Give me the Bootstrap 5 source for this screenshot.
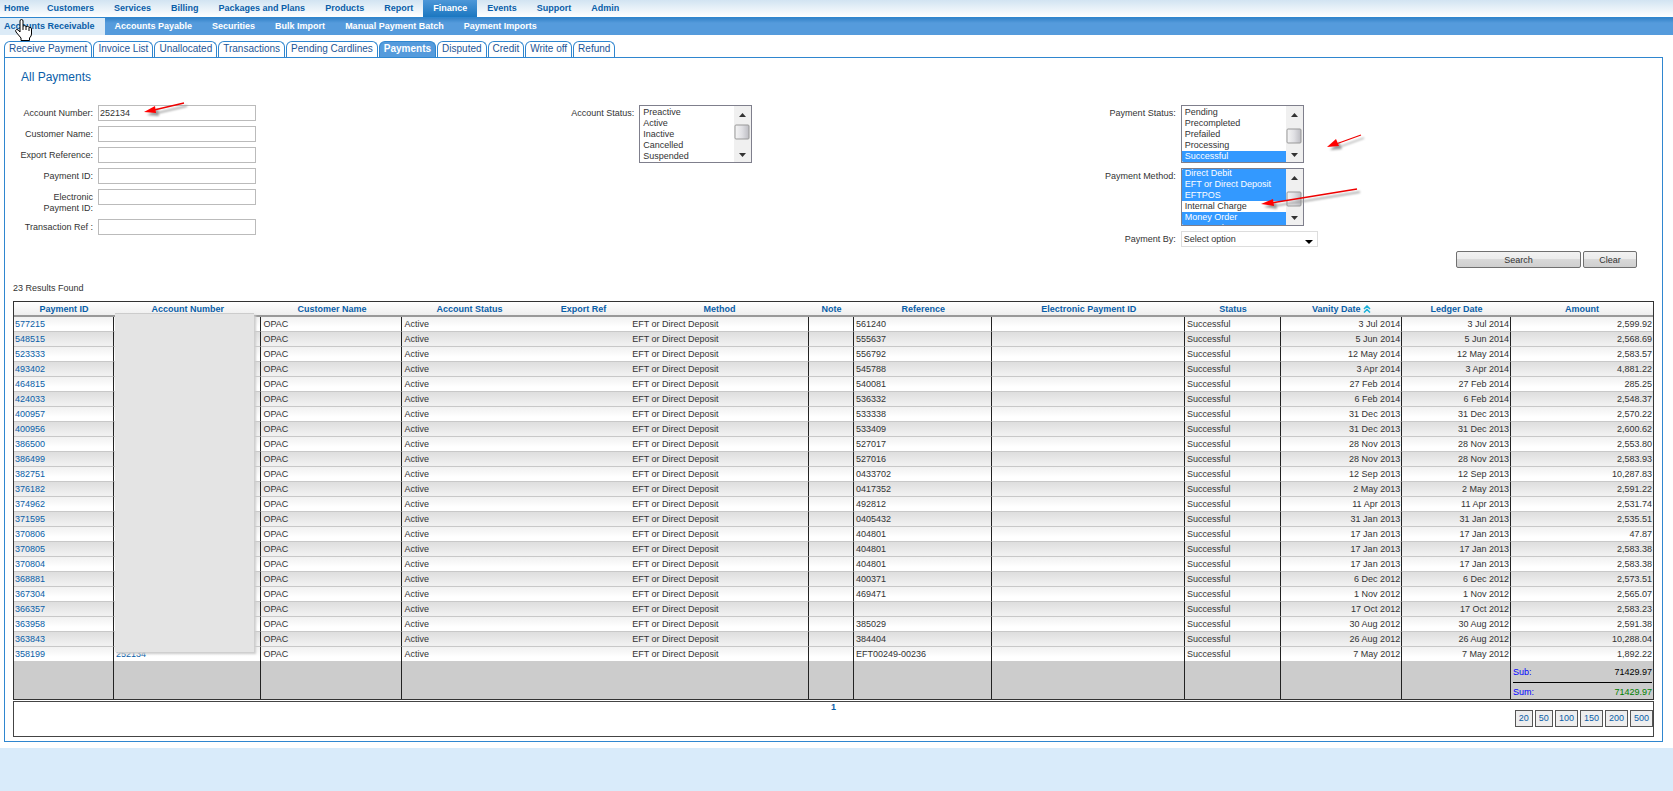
<!DOCTYPE html>
<html lang="en">
<head>
<meta charset="utf-8">
<meta name="viewport" content="width=device-width, initial-scale=1">
<title>All Payments</title>
<link rel="stylesheet" href="https://cdn.jsdelivr.net/npm/bootstrap@5.3.0/dist/css/bootstrap.min.css">
<style>
  body { font: 9px/11px "Liberation Sans", Arial, sans-serif; color: #333; background: #d9ebfa; }
  a { text-decoration: none; color: #0a5ea8; }
  .page-sheet { background: #fff; padding-bottom: 6px; }
  .topnav { height: 18px; background: linear-gradient(#d2e4f2, #fff); border-bottom: 1px solid #2f86cf; font-weight: bold; }
  .topnav a, .subnav a { padding: 0 10px; line-height: 16px; }
  .topnav a:first-child { padding: 0 8px 0 4px; }
  .subnav a:first-child { padding-left: 4px; }
  .topnav a.active { color: #fff; background: linear-gradient(#4c97d8, #1c77c0); }
  .subnav { height: 17px; background: linear-gradient(#3583c8, #559bdc 5px); font-weight: bold; }
  .subnav a { color: #fff; }
  .subnav a.active { color: #0a5ea8; background: #dcebf7; }
  .hand { position: absolute; left: 15px; top: 19px; pointer-events: none; }
  .tabs { margin: 6px 10px 0 4px; gap: 1px; }
  .tabs a { height: 16px; padding: 0 4px; line-height: 14px; font-size: 10px; border: 1px solid #2f86cf; border-bottom: 0; border-radius: 6px 6px 0 0; color: #1c5596; }
  .tabs a.active { background: #559bdc; color: #fff; font-weight: bold; }
  .panel { margin: 0 10px 0 4px; border: 1px solid #2f86cf; padding: 0 8px 4px; }
  .panel h1 { font-size: 12px; line-height: 14px; color: #0a5ea8; margin: 12px 0 21px 8px; }
  .filters, .actions { margin-right: 17px; }
  .actions { gap: 2px; margin-top: -1px; }
  .field { display: grid; grid-template-columns: 80px 1fr; column-gap: 5px; justify-items: start; margin-bottom: 5px; position: relative; }
  .field label { justify-self: end; text-align: right; padding-top: 3px; }
  .field input { width: 158px; height: 16px; border: 1px solid #bbb; padding: 0 1px; color: #333; }
  .listbox { position: relative; height: 58px; border: 1px solid #7f7f8c; overflow: hidden; }
  .listbox select { width: 100%; height: 56px; border: 0; padding: 1px 16px 0 0; color: #333; outline: 0; background: #fff; overflow-y: scroll; scrollbar-width: none; display: block; }
  .listbox select::-webkit-scrollbar { display: none; }
  .listbox option { padding: 0 3px; line-height: 11px; min-height: 11px; height: 11px; }
  .listbox option:checked { background: #3399ff linear-gradient(#3399ff, #3399ff); color: #fff; }
  .listbox svg { position: absolute; right: 0; top: 0; }
  .status-a { width: 113px; }
  .status-b { width: 123px; }
  .pay-by { width: 137px; height: 16px; border: 1px solid #ddd; padding: 0 2px; color: #333; appearance: none; background: #fff url("data:image/svg+xml,%3Csvg xmlns='http://www.w3.org/2000/svg' width='8' height='5'%3E%3Cpath d='M0 0h8L4 4z'/%3E%3C/svg%3E") no-repeat right 4px bottom 1px; }
  .push { height: 17px; border: 1px solid #707070; border-radius: 2px; background: linear-gradient(#f2f2f2, #ebebeb 50%, #d9d9d9 50%, #cfcfcf); color: #333; padding: 0; line-height: 14px; }
  .push-wide { width: 125px; }
  .push-slim { width: 54px; }
  .found { margin: 15px 0 7px; }
  .grid-table { table-layout: fixed; width: 100%; border: 1px solid #333; border-collapse: separate; border-spacing: 0; }
  .grid-table th { height: 15px; padding: 0; text-align: center; color: #0a5ea8; border-bottom: 2px solid #999; background: linear-gradient(#fff, #eee); line-height: 12px; }
  .grid-table td { height: 15px; padding: 0 1px; white-space: nowrap; line-height: 12px; }
  .grid-table td:nth-child(n+2) { padding-left: 2px; }
  .grid-table tbody td { border-bottom: 1px solid #c8c8c8; background: linear-gradient(#f1f1f1, #fff 10px); }
  .grid-table tbody tr:nth-child(even) td { background: linear-gradient(#dedede, #f0f0f0 12px); }
  .grid-table tbody tr:last-child td { border-bottom: 0; height: 14px; }
  .grid-table td:not(:nth-child(4), :nth-child(5), :last-child) { border-right: 1px solid #222; }
  .grid-table tfoot td { background: #ccc; height: 38px; vertical-align: bottom; }
  .sub-line { height: 22px; padding-top: 5px; border-bottom: 1px solid #000; color: #000; }
  .sum-line { height: 16px; padding-top: 3px; color: #008000; }
  .sum-name { color: #00f; }
  .cover-host { position: relative; }
  .cover { position: absolute; z-index: 1; left: 1px; right: 7px; top: 11px; height: 339px; background: #e4e4e4; border-top: 1px solid #ccc; box-shadow: 2px 2px 2px #ccc; }
  .pager { display: grid; grid-template-columns: 1fr auto 1fr; margin-top: 1px; height: 36px; border: 1px solid #444; }
  .page-now { grid-column: 2; }
  .pager-links { gap: 2px; margin-top: 8px; }
  .pager-links a { border: 1px solid #555; background: #eee; padding: 0 3px; height: 17px; line-height: 14px; }
  .note-arrow { position: absolute; left: 0; top: 0; overflow: visible; pointer-events: none; z-index: 2; filter: drop-shadow(3px 3px 1px #999); fill: #f00; stroke: #e00; stroke-width: 1.300; }
</style>
</head>
<body>
<div class="page-sheet position-relative">
  <nav class="topnav d-flex" aria-label="Main">
    <a href="#">Home</a><a href="#">Customers</a><a href="#">Services</a><a href="#">Billing</a><a href="#">Packages and Plans</a><a href="#">Products</a><a href="#">Report</a><a href="#" class="active">Finance</a><a href="#">Events</a><a href="#">Support</a><a href="#">Admin</a>
  </nav>
  <nav class="subnav d-flex" aria-label="Finance">
    <a href="#" class="active">Accounts Receivable</a><a href="#">Accounts Payable</a><a href="#">Securities</a><a href="#">Bulk Import</a><a href="#">Manual Payment Batch</a><a href="#">Payment Imports</a>
  </nav>
  <svg class="hand" width="18" height="22" viewBox="0 0 18 22" aria-hidden="true"><path d="M5 11V2q0-1.500 1.500-1.500T8 2v5q2-1 3 .5 2-.8 3 .8 2.500-.3 2.500 1.700v5q0 2-2 4v2.500H6V19L1 13q-1-2 .5-2.500T5 13z" fill="#fff" stroke="#000"/><path d="M8 7v4M11 8v3M14 9v3" stroke="#000" fill="none"/></svg>
  <nav class="tabs d-flex" aria-label="Accounts receivable">
    <a href="#">Receive Payment</a><a href="#">Invoice List</a><a href="#">Unallocated</a><a href="#">Transactions</a><a href="#">Pending Cardlines</a><a href="#" class="active">Payments</a><a href="#">Disputed</a><a href="#">Credit</a><a href="#">Write off</a><a href="#">Refund</a>
  </nav>
  <main class="panel">
    <h1>All Payments</h1>
    <form>
      <div class="filters row g-0">
        <div class="col-4">
          <div class="field"><label for="acc">Account Number:</label><input id="acc" type="text" value="252134">
            <svg class="note-arrow" width="180" height="16" aria-hidden="true"><path d="M141 5L171-2" /><path d="M131 7l11-6 1 7z" stroke="none"/></svg>
          </div>
          <div class="field"><label for="cust">Customer Name:</label><input id="cust" type="text"></div>
          <div class="field"><label for="exp">Export Reference:</label><input id="exp" type="text"></div>
          <div class="field"><label for="pid">Payment ID:</label><input id="pid" type="text"></div>
          <div class="field"><label for="epid">Electronic<br>Payment ID:</label><input id="epid" type="text"></div>
          <div class="field"><label for="tref">Transaction Ref :</label><input id="tref" type="text"></div>
        </div>
        <div class="col-4">
          <div class="field"><label for="ast">Account Status:</label>
            <div class="listbox status-a">
              <select id="ast" multiple><option>Preactive</option><option>Active</option><option>Inactive</option><option>Cancelled</option><option>Suspended</option></select>
              <svg width="17" height="56" aria-hidden="true"><use href="#track"/><use href="#thumb" y="19"/></svg>
            </div>
          </div>
        </div>
        <div class="col-4">
          <div class="field"><label for="pst">Payment Status:</label>
            <div class="listbox status-b">
              <select id="pst" multiple><option>Pending</option><option>Precompleted</option><option>Prefailed</option><option>Processing</option><option selected>Successful</option></select>
              <svg width="17" height="56" aria-hidden="true"><use href="#track"/><use href="#thumb" y="23"/></svg>
            </div>
            <svg class="note-arrow" width="270" height="50" aria-hidden="true"><path d="M240 39L265 30"/><path d="M231 42l9-8 3 7z" stroke="none"/></svg>
          </div>
          <div class="field"><label for="pme">Payment Method:</label>
            <div class="listbox status-b">
              <select id="pme" multiple><option selected>Direct Debit</option><option selected>EFT or Direct Deposit</option><option selected>EFTPOS</option><option>Internal Charge</option><option selected>Money Order</option><option selected>Pay By Phone</option></select>
              <svg width="17" height="56" aria-hidden="true"><use href="#track"/><use href="#thumb" y="23"/></svg>
            </div>
            <svg class="note-arrow" width="270" height="50" aria-hidden="true"><path d="M175 35L261 21"/><path d="M165 36l12-5 1 7z" stroke="none"/></svg>
          </div>
          <div class="field"><label for="pby">Payment By:</label><select id="pby" class="pay-by"><option>Select option</option></select></div>
        </div>
      </div>
      <div class="actions d-flex justify-content-end">
        <button type="submit" class="push push-wide">Search</button>
        <button type="reset" class="push push-slim">Clear</button>
      </div>
    </form>
    <p class="found">23 Results Found</p>
    <table class="grid-table">
      <colgroup><col style="width:6.1%"><col style="width:9%"><col style="width:8.6%"><col style="width:8.2%"><col style="width:5.7%"><col style="width:10.9%"><col style="width:2.75%"><col style="width:8.45%"><col style="width:11.75%"><col style="width:5.85%"><col style="width:7.4%"><col style="width:6.64%"><col></colgroup>
      <thead><tr>
        <th>Payment ID</th><th class="cover-host">Account Number<div class="cover"></div></th><th>Customer Name</th><th>Account Status</th><th>Export Ref</th><th>Method</th><th>Note</th><th>Reference</th><th>Electronic Payment ID</th><th>Status</th>
        <th>Vanity Date <svg width="8" height="8" viewBox="0 0 8 8" fill="none" stroke="#1ab0d8" stroke-width="1.500" aria-hidden="true"><path d="M1 4l3-3 3 3M1 7.500l3-3 3 3"/></svg></th>
        <th>Ledger Date</th><th>Amount</th>
      </tr></thead>
      <tbody id="rows"></tbody>
      <tfoot><tr>
        <td></td><td></td><td></td><td></td><td></td><td></td><td></td><td></td><td></td><td></td><td></td><td></td>
        <td>
          <div class="sub-line d-flex justify-content-between"><span class="sum-name">Sub:</span><span>71429.97</span></div>
          <div class="sum-line d-flex justify-content-between"><span class="sum-name">Sum:</span><span>71429.97</span></div>
        </td>
      </tr></tfoot>
    </table>
    <nav class="pager" aria-label="Pages">
      <a href="#" class="page-now fw-bold">1</a>
      <div class="pager-links d-flex justify-content-end"><a href="#">20</a><a href="#">50</a><a href="#">100</a><a href="#">150</a><a href="#">200</a><a href="#">500</a></div>
    </nav>
  </main>
</div>
<svg width="0" height="0" class="position-absolute" aria-hidden="true">
  <defs>
    <linearGradient id="metal"><stop offset="0" stop-color="#f5f5f5"/><stop offset=".5" stop-color="#e0e0e4"/><stop offset="1" stop-color="#bcbcc2"/></linearGradient>
    <g id="track"><path d="M0 0h17v60H0z" fill="#f0f0f0"/><path d="M5 11l3.500-4 3.500 4zM5 47l3.500 4 3.500-4z" fill="#333"/></g>
    <rect id="thumb" x="1" width="14" height="14" rx="1" fill="url(#metal)" stroke="#999"/>
  </defs>
</svg>
<script src="https://cdn.jsdelivr.net/npm/bootstrap@5.3.0/dist/js/bootstrap.bundle.min.js"></script>
<script>
  // payment id | reference | date | amount
  const payments = `577215|561240|3 Jul 2014|2,599.92
548515|555637|5 Jun 2014|2,568.69
523333|556792|12 May 2014|2,583.57
493402|545788|3 Apr 2014|4,881.22
464815|540081|27 Feb 2014|285.25
424033|536332|6 Feb 2014|2,548.37
400957|533338|31 Dec 2013|2,570.22
400956|533409|31 Dec 2013|2,600.62
386500|527017|28 Nov 2013|2,553.80
386499|527016|28 Nov 2013|2,583.93
382751|0433702|12 Sep 2013|10,287.83
376182|0417352|2 May 2013|2,591.22
374962|492812|11 Apr 2013|2,531.74
371595|0405432|31 Jan 2013|2,535.51
370806|404801|17 Jan 2013|47.87
370805|404801|17 Jan 2013|2,583.38
370804|404801|17 Jan 2013|2,583.38
368881|400371|6 Dec 2012|2,573.51
367304|469471|1 Nov 2012|2,565.07
366357||17 Oct 2012|2,583.23
363958|385029|30 Aug 2012|2,591.38
363843|384404|26 Aug 2012|10,288.04
358199|EFT00249-00236|7 May 2012|1,892.22`.split("\n").map(line => line.split("|"));
  document.getElementById("rows").innerHTML = payments.map(([id, ref, date, amount]) => `<tr>
    <td><a href="#">${id}</a></td><td>${id === "358199" ? '<a href="#">252134</a>' : ""}</td><td>OPAC</td><td>Active</td><td></td>
    <td>EFT or Direct Deposit</td><td></td><td>${ref}</td><td></td><td>Successful</td>
    <td class="text-end">${date}</td><td class="text-end">${date}</td><td class="text-end">${amount}</td></tr>`).join("");
  document.getElementById("pme").scrollTop = 2;
</script>
</body>
</html>
